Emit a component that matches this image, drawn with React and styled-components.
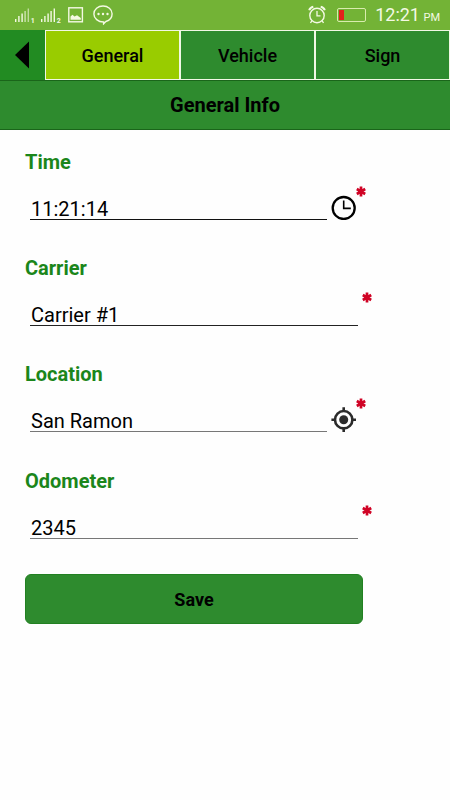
import React from 'react'
import styled, {createGlobalStyle} from 'styled-components';

const fields = [
    {label: 'Time', value: '11:21:14', icon: 'clock', line: '#111111'},
    {label: 'Carrier', value: 'Carrier #1', line: '#222222'},
    {label: 'Location', value: 'San Ramon', icon: 'target', line: '#777777'},
    {label: 'Odometer', value: '2345', line: '#777777'},
];

const Signal = ({sim}) => (
    <svg width="20" height="20" viewBox="0 -3 20 20" fill="#f4f9e4">
        <rect x="0" y="11" width="1.4" height="3"/>
        <rect x="3.2" y="8" width="1.4" height="6"/>
        <rect x="6.4" y="5.5" width="1.4" height="8.5"/>
        <rect x="9.4" y="3" width="1.4" height="11" opacity={sim === 1 ? 0.7 : 1}/>
        <rect x="12.6" y="0.5" width="1.4" height="13.5" opacity={sim === 1 ? 0.6 : 1}/>
        <text x="15.8" y="14.8" fontSize="7" fontWeight="700" fontFamily="Roboto, sans-serif">{sim}</text>
    </svg>
);

const Picture = () => (
    <svg width="16" height="16" viewBox="0 0 16 16">
        <rect x="0.8" y="0.8" width="13.6" height="14" fill="none" stroke="#f4f9e4" strokeWidth="1.4"/>
        <path d="M2.5 12.8V9.5L4.5 7.8L6.5 9.5L9 8.3L12.8 11V12.8Z" fill="#f4f9e4"/>
    </svg>
);

const Chat = () => (
    <svg width="20" height="20" viewBox="0 0 20 20">
        <path d="M10 1C15 1 19.1 4.3 19.1 8.7C19.1 12.4 16.4 15.4 12.8 16.5L10.6 18.8V17C5 17 .9 13.4 .9 8.9C.9 4.4 5 1 10 1Z" fill="none" stroke="#f4f9e4" strokeWidth="1.4"/>
        <circle cx="5.5" cy="9" r="1.2" fill="#f4f9e4"/>
        <circle cx="10" cy="9" r="1.2" fill="#f4f9e4"/>
        <circle cx="14.5" cy="9" r="1.2" fill="#f4f9e4"/>
    </svg>
);

const Alarm = () => (
    <svg width="18" height="20" viewBox="0 0 18 20" fill="none" stroke="#f4f9e4">
        <circle cx="9" cy="10.5" r="7.2" strokeWidth="1.4"/>
        <path d="M9 6V10.8H12.5" strokeWidth="1.3"/>
        <path d="M1.2 5.2C1.8 3.4 3.3 2.1 5.3 1.7M12.7 1.7C14.7 2.1 16.2 3.4 16.8 5.2" strokeWidth="2"/>
        <path d="M3.8 15.8L2.5 18M14.2 15.8L15.5 18" strokeWidth="1.3"/>
    </svg>
);

const Clock = () => (
    <svg width="26" height="26" viewBox="0 0 26 26" fill="none" stroke="#000000">
        <circle cx="12.7" cy="14" r="11" strokeWidth="2.3"/>
        <path d="M12.7 6.5V14.4H19.8" strokeWidth="1.6"/>
    </svg>
);

const Target = () => (
    <svg width="26" height="26" viewBox="0 0 26 26" fill="none" stroke="#2b2b2b">
        <circle cx="12.7" cy="13.7" r="8.7" strokeWidth="2.6"/>
        <circle cx="12.7" cy="13.7" r="4.5" fill="#2b2b2b" stroke="none"/>
        <path d="M12.7 1.2V5.5M12.7 21.9V26M.4 13.7H4.5M20.9 13.7H25" strokeWidth="2.6"/>
    </svg>
);

const Required = () => (
    <Star width="10" height="11" viewBox="0 0 10 11">
        <path d="M5 .5V10.5M.8 3L9.2 8M.8 8L9.2 3" stroke="#d00325" strokeWidth="2.7"/>
    </Star>
);

const Field = ({label, value, icon, line}) => (
    <FieldBox>
        <Label>{label}</Label>
        <Row>
            <Value $short={!!icon} $line={line}>{value}</Value>
            {icon && <IconBox>{icon === 'clock' ? <Clock/> : <Target/>}</IconBox>}
            <Required/>
        </Row>
    </FieldBox>
);

export default class App extends React.Component{

    render() {
        return(
            <Screen>
                <GlobalStyle/>
                <StatusBar>
                    <StatusIcons>
                        <Signal sim={1}/>
                        <Signal sim={2}/>
                        <Picture/>
                        <Chat/>
                    </StatusIcons>
                    <StatusInfo>
                        <Alarm/>
                        <Battery/>
                        <Time>12:21 <small>PM</small></Time>
                    </StatusInfo>
                </StatusBar>
                <Tabs>
                    <Back>
                        <svg width="15" height="28" viewBox="0 0 15 28">
                            <path d="M14 .5V27.5L0 14Z" fill="#000000"/>
                        </svg>
                    </Back>
                    <Tab $active>General</Tab>
                    <Tab>Vehicle</Tab>
                    <Tab>Sign</Tab>
                </Tabs>
                <Title>General Info</Title>
                <Form>
                    {fields.map(field => <Field key={field.label} {...field}/>)}
                    <SaveButton>Save</SaveButton>
                </Form>
            </Screen>
        )
    }
}

const GlobalStyle = createGlobalStyle`
  * {
    box-sizing: border-box;
  }
  body {
    margin: 0;
    background: #fefefe;
  }
  svg {
    display: block;
    flex-shrink: 0;
  }
`;

const Screen = styled.div`
  width: 450px;
  height: 800px;
  overflow: hidden;
  background: #fefefe;
  color: #000000;
  font-family: Roboto, sans-serif;
`;

const StatusBar = styled.div`
  display: flex;
  justify-content: space-between;
  height: 30px;
  padding: 0 10px 0 15px;
  background: #73b336;
`;

const StatusIcons = styled.div`
  display: flex;
  align-items: center;
  gap: 6px;
  svg:nth-child(3) {
    margin-left: 1px;
  }
  svg:nth-child(4) {
    margin-left: 3px;
  }
`;

const StatusInfo = styled.div`
  display: flex;
  align-items: center;
`;

const Battery = styled.div`
  width: 29px;
  height: 14px;
  margin: 0 9px 0 11px;
  padding: 1px;
  border: 1px solid #d9ecae;
  border-radius: 2px;
  &::before {
    content: '';
    display: block;
    width: 5px;
    height: 10px;
    background: #e3211b;
  }
`;

const Time = styled.div`
  font-size: 18px;
  line-height: 30px;
  padding-top: 3px;
  color: #f4f9e4;
  white-space: nowrap;
  small {
    margin-left: -1px;
    font-size: 11px;
  }
`;

const Tabs = styled.div`
  display: grid;
  grid-template-columns: 45px 135px 135px 135px;
  height: 50px;
`;

const Back = styled.div`
  display: flex;
  align-items: center;
  padding-left: 15px;
  background: #228b22;
`;

const Tab = styled.div`
  display: flex;
  align-items: center;
  justify-content: center;
  border: 1px solid #f1f8e5;
  background: ${props => props.$active ? '#99cc00' : '#2e8b2e'};
  font-size: 18px;
  font-weight: 500;
  cursor: pointer;
`;

const Title = styled.div`
  height: 50px;
  border-top: 1px solid #1a651a;
  border-bottom: 1px solid #1a651a;
  background: #2e8b2e;
  font-size: 20px;
  font-weight: bold;
  line-height: 49px;
  text-align: center;
`;

const Form = styled.div`
  padding: 18px 0 0 25px;
`;

const FieldBox = styled.div`
  height: 106.2px;
`;

const Label = styled.div`
  height: 28px;
  font-size: 20px;
  font-weight: bold;
  line-height: 28px;
  color: #1b861b;
`;

const Row = styled.div`
  display: flex;
  align-items: flex-end;
  height: 44px;
  padding-left: 5px;
`;

const Value = styled.div`
  width: ${props => props.$short ? 297 : 328}px;
  height: 26px;
  margin-right: 4px;
  padding-left: 1px;
  border-bottom: 1px solid ${props => props.$line};
  font-size: 20px;
  line-height: 30px;
`;

const IconBox = styled.div`
  margin-right: -1px;
`;

const Star = styled.svg`
  align-self: flex-start;
  margin-top: 10px;
`;

const SaveButton = styled.button`
  display: block;
  width: 338px;
  height: 50px;
  margin: 1px 0 0;
  padding: 1px 0 0;
  border: 1px solid #228022;
  border-radius: 6px;
  background: #2e8b2e;
  color: #000000;
  font-family: Roboto, sans-serif;
  font-size: 18px;
  font-weight: bold;
  cursor: pointer;
`;
